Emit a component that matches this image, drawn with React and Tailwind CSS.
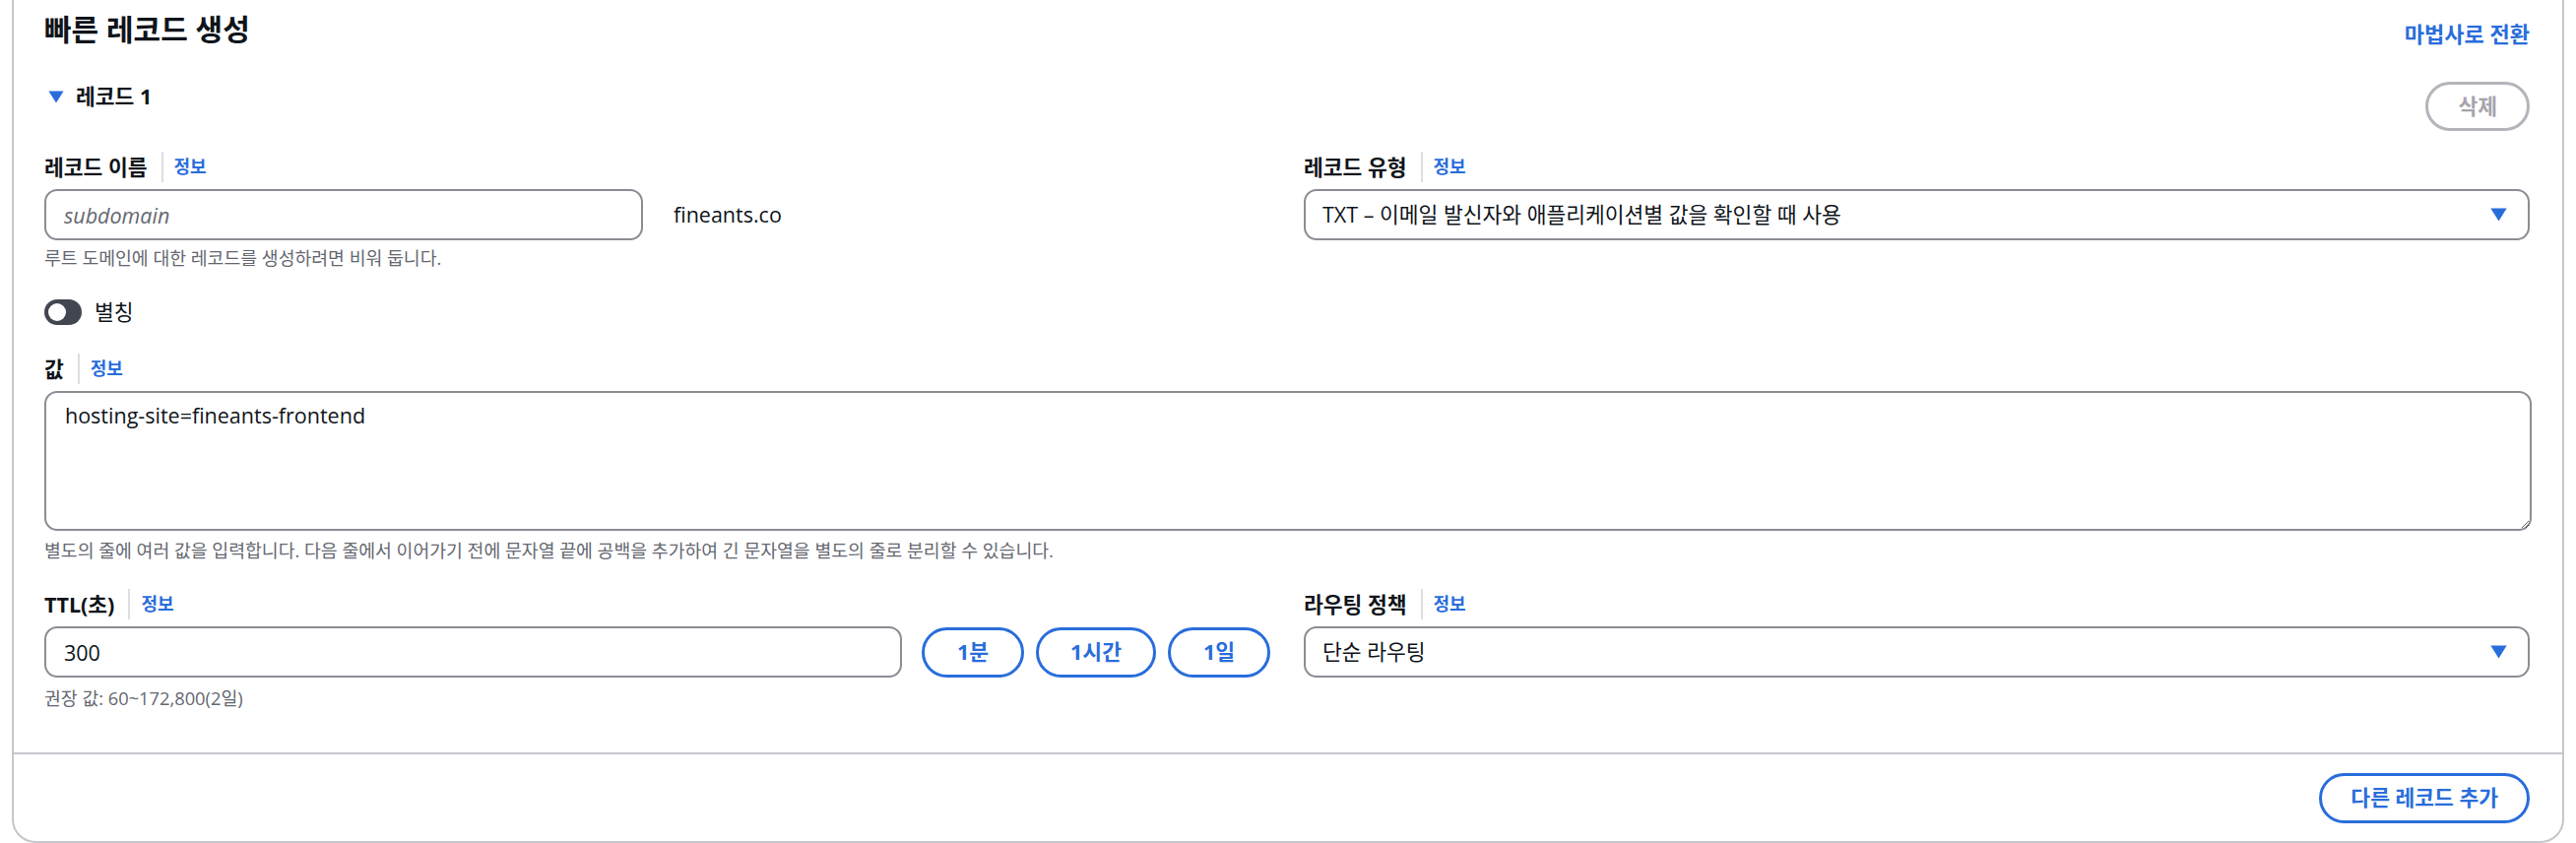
import { useState } from 'react';

const font = { fontFamily: '"Open Sans", "Noto Sans CJK KR", sans-serif' };

const Caret = ({ className }) => (
  <svg viewBox="0 0 14 12" className={className}>
    <path d="M0 0.5h14L7 11.5z" fill="currentColor" />
  </svg>
);

const FieldLabel = ({ children }) => (
  <div className="flex items-center h-[31px]">
    <span className="text-[21.5px] font-bold leading-[31px] text-[#0f141a]">{children}</span>
    <span className="ml-[14px] w-[2px] h-[31px] bg-[#dedee3]" />
    <a className="pl-[11px] text-[18px] font-bold text-[#296ddb] leading-[31px]">정보</a>
  </div>
);

const Helper = ({ children, className = '' }) => (
  <p className={`text-[18.3px] leading-[26px] text-[#656871] ${className}`}>{children}</p>
);

const SelectBox = ({ value }) => (
  <div className="flex items-center justify-between h-[52px] border-2 border-[#8c8c94] rounded-[13px] pl-[17px] pr-[21px]">
    <span className="text-[21.5px] text-[#0f141a]">{value}</span>
    <Caret className="w-[17px] h-[14px] text-[#296ddb]" />
  </div>
);

const PillButton = ({ children, className = 'px-[29px]' }) => (
  <button className={`h-[51px] rounded-full border-[3px] border-[#296ddb] text-[#296ddb] text-[21.5px] font-bold ${className}`}>
    {children}
  </button>
);

const App = () => {
  const [alias, setAlias] = useState(false);

  return (
    <div className="w-[2616px] h-[856px] bg-white px-[12px]" style={font}>
      <div className="border-x-2 border-b-2 border-[#c6c6cd] rounded-b-[24px] bg-white">
        <div className="pl-[31px] pr-[33px] pb-[42px]">
          {/* Header */}
          <div className="flex justify-between items-start">
            <h2 className="pt-[12px] text-[30px] leading-[36px] font-bold text-[#0f141a]">빠른 레코드 생성</h2>
            <a className="pt-[22px] text-[22px] leading-[24px] font-bold text-[#296ddb]">마법사로 전환</a>
          </div>

          {/* Record header */}
          <div className="mt-[35px] flex justify-between items-start">
            <div className="flex items-center h-[30px] gap-[12px]">
              <Caret className="ml-[4px] w-[16px] h-[13px] text-[#296ddb]" />
              <span className="text-[21.5px] font-bold text-[#0f141a]">레코드 1</span>
            </div>
            <button className="h-[50px] px-[30px] rounded-full border-[3px] border-[#b4b4bb] text-[#a4a4ad] text-[21.5px] font-bold">
              삭제
            </button>
          </div>

          <div className="mt-[21px] grid grid-cols-2 gap-x-[34px]">
            <div>
              <FieldLabel>레코드 이름</FieldLabel>
              <div className="mt-[7px] flex items-center">
                <input
                  placeholder="subdomain"
                  className="w-[608px] h-[52px] border-2 border-[#8c8c94] rounded-[13px] px-[18px] text-[21.5px] italic placeholder:text-[#656871] outline-none"
                />
                <span className="ml-[31px] text-[21.5px] text-[#0f141a]">fineants.co</span>
              </div>
              <Helper className="mt-[5px]">루트 도메인에 대한 레코드를 생성하려면 비워 둡니다.</Helper>
            </div>
            <div>
              <FieldLabel>레코드 유형</FieldLabel>
              <div className="mt-[7px]">
                <SelectBox value="TXT – 이메일 발신자와 애플리케이션별 값을 확인할 때 사용" />
              </div>
            </div>
          </div>

          {/* Alias toggle */}
          <div className="mt-[29px] flex items-center h-[26px] gap-[13px]">
            <button
              onClick={() => setAlias(!alias)}
              className={`w-[38px] h-[26px] rounded-full bg-[#424650] flex items-center px-[4px] ${alias ? 'justify-end' : 'justify-start'}`}
            >
              <span className="w-[18px] h-[18px] rounded-full bg-white" />
            </button>
            <span className="text-[21.5px] text-[#0f141a]">별칭</span>
          </div>

          {/* Value */}
          <div className="mt-[29px]">
            <FieldLabel>값</FieldLabel>
            <textarea
              defaultValue="hosting-site=fineants-frontend"
              className="mt-[7px] block w-[calc(100%+2px)] h-[142px] border-2 border-[#8c8c94] rounded-[13px] px-[19px] py-[8px] text-[21.5px] leading-[30px] text-[#0f141a] outline-none resize-y"
            />
            <Helper className="mt-[7px]">별도의 줄에 여러 값을 입력합니다. 다음 줄에서 이어가기 전에 문자열 끝에 공백을 추가하여 긴 문자열을 별도의 줄로 분리할 수 있습니다.</Helper>
          </div>

          <div className="mt-[26px] grid grid-cols-2 gap-x-[34px]">
            <div>
              <FieldLabel>TTL(초)</FieldLabel>
              <div className="mt-[7px] flex items-center">
                <input
                  defaultValue="300"
                  className="flex-1 min-w-0 h-[52px] border-2 border-[#8c8c94] rounded-[13px] px-[18px] text-[21.5px] text-[#0f141a] outline-none"
                />
                <div className="ml-[20px] flex gap-[12px]">
                  <PillButton className="px-[33px]">1분</PillButton>
                  <PillButton className="px-[32px]">1시간</PillButton>
                  <PillButton className="px-[33px]">1일</PillButton>
                </div>
              </div>
              <Helper className="mt-[8px]">권장 값: 60~172,800(2일)</Helper>
            </div>
            <div>
              <FieldLabel>라우팅 정책</FieldLabel>
              <div className="mt-[7px]">
                <SelectBox value="단순 라우팅" />
              </div>
            </div>
          </div>
        </div>

        {/* Footer */}
        <div className="border-t-2 border-[#c6c6cd] flex justify-end pt-[19px] pb-[18px] pr-[33px]">
          <PillButton>다른 레코드 추가</PillButton>
        </div>
      </div>
    </div>
  );
};

export default App;
